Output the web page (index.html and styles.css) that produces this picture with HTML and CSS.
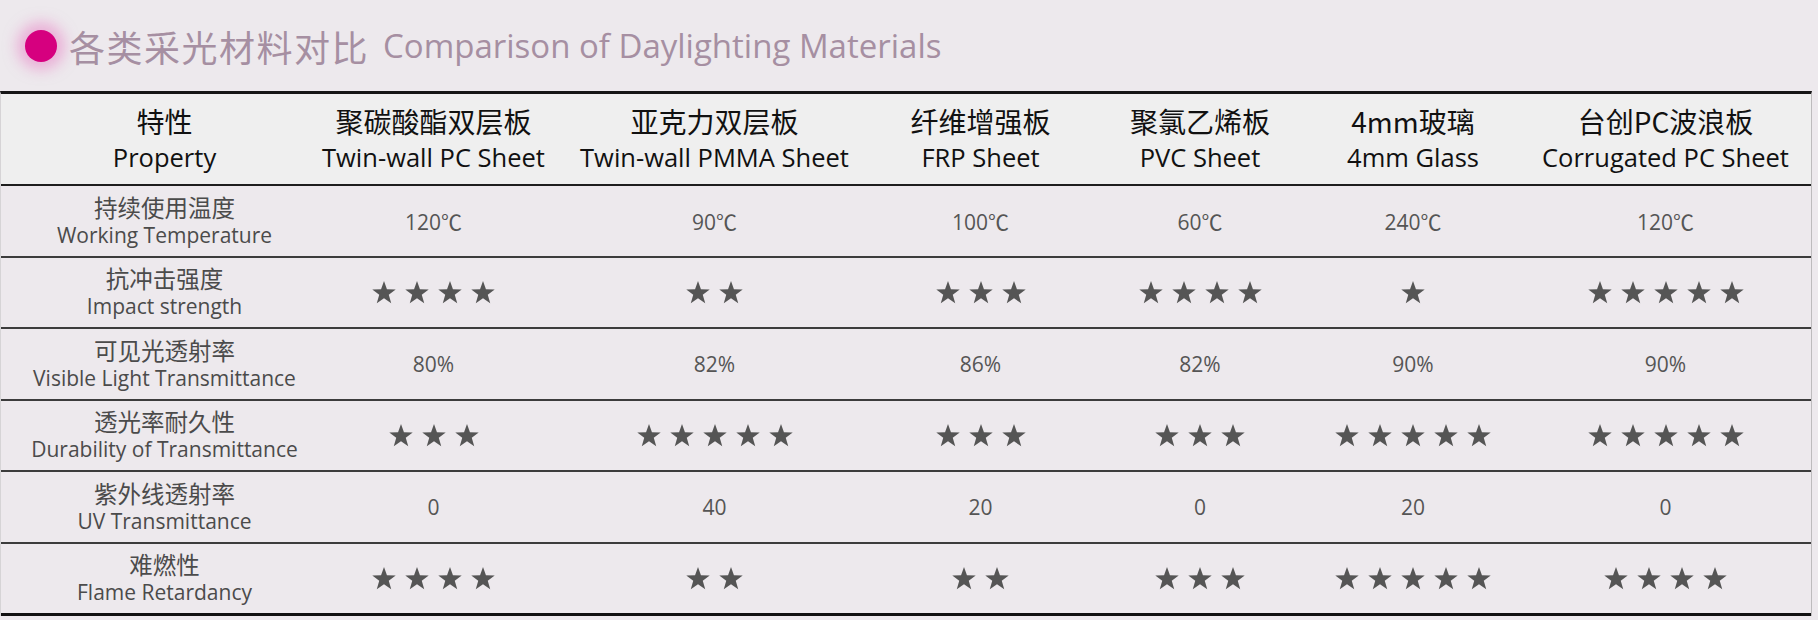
FILE: index.html
```html
<!DOCTYPE html>
<html lang="zh">
<head>
<meta charset="utf-8">
<title>各类采光材料对比</title>
<link rel="stylesheet" href="styles.css">
</head>
<body>
<svg class="defs" aria-hidden="true">
  <symbol id="star" viewBox="0 0 24 23">
    <polygon points="12,0 14.94,8.26 23.7,8.5 16.76,13.85 19.23,22.25 12,17.3 4.77,22.25 7.24,13.85 0.3,8.5 9.06,8.26"/>
  </symbol>
</svg>
<div class="page">
  <div class="title">
    <span class="dot"></span>
    <span class="title-cn">各类采光材料对比</span>
    <span class="title-en">Comparison of Daylighting Materials</span>
  </div>

  <div class="table">
    <div class="row head">
      <div class="pad"></div>
      <div class="cell"><span class="cn">特性</span><span class="en">Property</span></div>
      <div class="cell"><span class="cn">聚碳酸酯双层板</span><span class="en">Twin-wall PC Sheet</span></div>
      <div class="cell"><span class="cn">亚克力双层板</span><span class="en">Twin-wall PMMA Sheet</span></div>
      <div class="cell"><span class="cn">纤维增强板</span><span class="en">FRP Sheet</span></div>
      <div class="cell"><span class="cn">聚氯乙烯板</span><span class="en">PVC Sheet</span></div>
      <div class="cell"><span class="cn">4mm玻璃</span><span class="en">4mm Glass</span></div>
      <div class="cell"><span class="cn">台创PC波浪板</span><span class="en">Corrugated PC Sheet</span></div>
    </div>

    <div class="row">
      <div class="pad"></div>
      <div class="cell label"><span class="cn">持续使用温度</span><span class="en">Working Temperature</span></div>
      <div class="cell val">120℃</div>
      <div class="cell val">90℃</div>
      <div class="cell val">100℃</div>
      <div class="cell val">60℃</div>
      <div class="cell val">240℃</div>
      <div class="cell val">120℃</div>
    </div>

    <div class="row">
      <div class="pad"></div>
      <div class="cell label"><span class="cn">抗冲击强度</span><span class="en">Impact strength</span></div>
      <div class="cell"><div class="stars"><svg class="star"><use href="#star"/></svg><svg class="star"><use href="#star"/></svg><svg class="star"><use href="#star"/></svg><svg class="star"><use href="#star"/></svg></div></div>
      <div class="cell"><div class="stars"><svg class="star"><use href="#star"/></svg><svg class="star"><use href="#star"/></svg></div></div>
      <div class="cell"><div class="stars"><svg class="star"><use href="#star"/></svg><svg class="star"><use href="#star"/></svg><svg class="star"><use href="#star"/></svg></div></div>
      <div class="cell"><div class="stars"><svg class="star"><use href="#star"/></svg><svg class="star"><use href="#star"/></svg><svg class="star"><use href="#star"/></svg><svg class="star"><use href="#star"/></svg></div></div>
      <div class="cell"><div class="stars"><svg class="star"><use href="#star"/></svg></div></div>
      <div class="cell"><div class="stars"><svg class="star"><use href="#star"/></svg><svg class="star"><use href="#star"/></svg><svg class="star"><use href="#star"/></svg><svg class="star"><use href="#star"/></svg><svg class="star"><use href="#star"/></svg></div></div>
    </div>

    <div class="row">
      <div class="pad"></div>
      <div class="cell label"><span class="cn">可见光透射率</span><span class="en">Visible Light Transmittance</span></div>
      <div class="cell val">80%</div>
      <div class="cell val">82%</div>
      <div class="cell val">86%</div>
      <div class="cell val">82%</div>
      <div class="cell val">90%</div>
      <div class="cell val">90%</div>
    </div>

    <div class="row">
      <div class="pad"></div>
      <div class="cell label"><span class="cn">透光率耐久性</span><span class="en">Durability of Transmittance</span></div>
      <div class="cell"><div class="stars"><svg class="star"><use href="#star"/></svg><svg class="star"><use href="#star"/></svg><svg class="star"><use href="#star"/></svg></div></div>
      <div class="cell"><div class="stars"><svg class="star"><use href="#star"/></svg><svg class="star"><use href="#star"/></svg><svg class="star"><use href="#star"/></svg><svg class="star"><use href="#star"/></svg><svg class="star"><use href="#star"/></svg></div></div>
      <div class="cell"><div class="stars"><svg class="star"><use href="#star"/></svg><svg class="star"><use href="#star"/></svg><svg class="star"><use href="#star"/></svg></div></div>
      <div class="cell"><div class="stars"><svg class="star"><use href="#star"/></svg><svg class="star"><use href="#star"/></svg><svg class="star"><use href="#star"/></svg></div></div>
      <div class="cell"><div class="stars"><svg class="star"><use href="#star"/></svg><svg class="star"><use href="#star"/></svg><svg class="star"><use href="#star"/></svg><svg class="star"><use href="#star"/></svg><svg class="star"><use href="#star"/></svg></div></div>
      <div class="cell"><div class="stars"><svg class="star"><use href="#star"/></svg><svg class="star"><use href="#star"/></svg><svg class="star"><use href="#star"/></svg><svg class="star"><use href="#star"/></svg><svg class="star"><use href="#star"/></svg></div></div>
    </div>

    <div class="row">
      <div class="pad"></div>
      <div class="cell label"><span class="cn">紫外线透射率</span><span class="en">UV Transmittance</span></div>
      <div class="cell val">0</div>
      <div class="cell val">40</div>
      <div class="cell val">20</div>
      <div class="cell val">0</div>
      <div class="cell val">20</div>
      <div class="cell val">0</div>
    </div>

    <div class="row last">
      <div class="pad"></div>
      <div class="cell label"><span class="cn">难燃性</span><span class="en">Flame Retardancy</span></div>
      <div class="cell"><div class="stars"><svg class="star"><use href="#star"/></svg><svg class="star"><use href="#star"/></svg><svg class="star"><use href="#star"/></svg><svg class="star"><use href="#star"/></svg></div></div>
      <div class="cell"><div class="stars"><svg class="star"><use href="#star"/></svg><svg class="star"><use href="#star"/></svg></div></div>
      <div class="cell"><div class="stars"><svg class="star"><use href="#star"/></svg><svg class="star"><use href="#star"/></svg></div></div>
      <div class="cell"><div class="stars"><svg class="star"><use href="#star"/></svg><svg class="star"><use href="#star"/></svg><svg class="star"><use href="#star"/></svg></div></div>
      <div class="cell"><div class="stars"><svg class="star"><use href="#star"/></svg><svg class="star"><use href="#star"/></svg><svg class="star"><use href="#star"/></svg><svg class="star"><use href="#star"/></svg><svg class="star"><use href="#star"/></svg></div></div>
      <div class="cell"><div class="stars"><svg class="star"><use href="#star"/></svg><svg class="star"><use href="#star"/></svg><svg class="star"><use href="#star"/></svg><svg class="star"><use href="#star"/></svg></div></div>
    </div>
  </div>
</div>
</body>
</html>
```

FILE: styles.css
```css
html, body {
  margin: 0;
  padding: 0;
  background: #ede9ed;
}

body {
  font-family: "Open Sans", "Noto Sans CJK SC", sans-serif;
  width: 1818px;
  height: 620px;
  overflow: hidden;
}

.defs {
  position: absolute;
  width: 0;
  height: 0;
  overflow: hidden;
}

.page {
  display: flex;
  flex-direction: column;
}

.title {
  height: 91px;
  display: flex;
  align-items: center;
  padding-left: 25px;
  box-sizing: border-box;
  color: #a68fa2;
}

.dot {
  width: 32px;
  height: 32px;
  border-radius: 50%;
  background: #d6007f;
  box-shadow: 0 0 14px 8px rgba(232, 130, 196, 0.55);
  margin-right: 12px;
  flex: none;
}

.title-cn {
  font-family: "Noto Sans CJK SC", sans-serif;
  font-size: 36px;
  line-height: 42px;
  letter-spacing: 1.5px;
}

.title-en {
  font-size: 33px;
  line-height: 42px;
  margin-left: 14px;
}

.table {
  width: 1812px;
  border-top: 3px solid #161616;
  border-left: 1px solid #d6d4d6;
  border-right: 1px solid #bdbbbd;
  box-sizing: border-box;
}

.row {
  display: grid;
  grid-template-columns: 22px 283px 255px 307px 225px 214px 212px 293px;
  height: 71.5px;
  box-sizing: border-box;
  border-bottom: 2px solid #3c3c3c;
}

.row.head {
  height: 92px;
  background: #efefef;
  border-bottom: 2px solid #1e1e1e;
}

.row.last {
  height: 72px;
  border-bottom: 3px solid #111;
}

.cell {
  display: flex;
  flex-direction: column;
  align-items: center;
  justify-content: center;
  text-align: center;
  white-space: nowrap;
}

.cell .cn,
.cell .en {
  display: block;
}

.head .cn {
  font-family: "Noto Sans CJK SC", sans-serif;
  font-size: 28px;
  line-height: 36px;
  color: #111;
}

.head .en {
  font-size: 25.5px;
  line-height: 36px;
  color: #111;
}

.label .cn {
  font-family: "Noto Sans CJK SC", sans-serif;
  font-size: 23.5px;
  line-height: 28px;
  color: #4b4b4b;
}

.label .en {
  font-size: 21px;
  line-height: 28px;
  color: #4b4b4b;
}

.val {
  font-size: 21px;
  color: #555;
}

.stars {
  display: flex;
  gap: 9px;
  align-items: center;
}

.star {
  width: 24px;
  height: 23px;
  fill: #555;
  display: block;
}
```
